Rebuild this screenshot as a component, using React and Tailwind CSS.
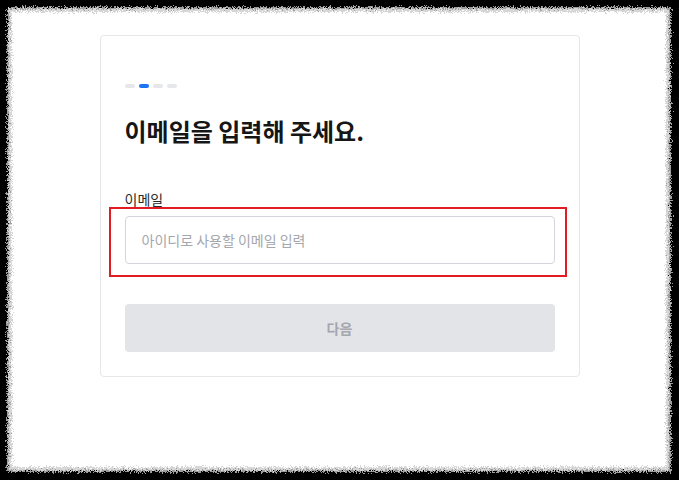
const font = { fontFamily: '"Noto Sans CJK KR", "Noto Sans", sans-serif' }

const Dots = () => {
  return (
    <div className="flex gap-1">
      <span className="h-1 w-2.5 rounded-full bg-[#e5e7eb]" />
      <span className="h-1 w-2.5 rounded-full bg-[#1a73f5]" />
      <span className="h-1 w-2.5 rounded-full bg-[#e5e7eb]" />
      <span className="h-1 w-2.5 rounded-full bg-[#e5e7eb]" />
    </div>
  )
}

// torn paper edge round the screenshot
const Frame = () => {
  return (
    <svg className="absolute inset-0 h-full w-full" width="679" height="480">
      <defs>
        <filter id="rough" x="-5%" y="-5%" width="110%" height="110%">
          <feTurbulence type="fractalNoise" baseFrequency="1.4" numOctaves="3" seed="7" />
          <feDisplacementMap in="SourceGraphic" scale="8" />
        </filter>
      </defs>
      <rect width="679" height="480" fill="#000" />
      <rect x="7" y="7" width="664" height="465" fill="#9e9e9e" filter="url(#rough)" />
      <rect x="9" y="9" width="660" height="461" fill="#d6d6d6" filter="url(#rough)" />
      <rect x="12" y="12" width="654" height="455" fill="#fff" filter="url(#rough)" />
    </svg>
  )
}

export default function App() {
  return (
    <div className="relative h-[480px] w-[679px] overflow-hidden bg-black" style={font}>
      <Frame />
      <div className="relative flex justify-center pt-[35px]">
        <div className="w-[480px] rounded-[4px] border border-[#e5e7eb] bg-white px-6 pt-12 pb-6">
          <Dots />
          <h1 className="mt-[27px] text-[24px] leading-8 font-bold text-[#161616]">
            이메일을 입력해 주세요.
          </h1>
          <label className="mt-[42px] mb-[7px] block text-[14px] leading-5 text-[#2b2b2b]">
            이메일
          </label>
          <div className="relative">
            <input
              className="h-12 w-full rounded-[4px] border border-[#d1d5db] bg-white px-4 text-[14px] text-[#222] outline-none placeholder:text-[#a3a7ae]"
              placeholder="아이디로 사용할 이메일 입력"
              style={font}
            />
            <div className="pointer-events-none absolute -top-[9px] -right-[12px] -bottom-[13px] -left-[16px] border-2 border-[#e31b23]" />
          </div>
          <button
            className="mt-10 flex h-12 w-full items-center justify-center rounded-[4px] bg-[#e3e4e8] text-[14px] font-bold text-[#a4a7ae]"
            style={font}
          >
            다음
          </button>
        </div>
      </div>
    </div>
  )
}
